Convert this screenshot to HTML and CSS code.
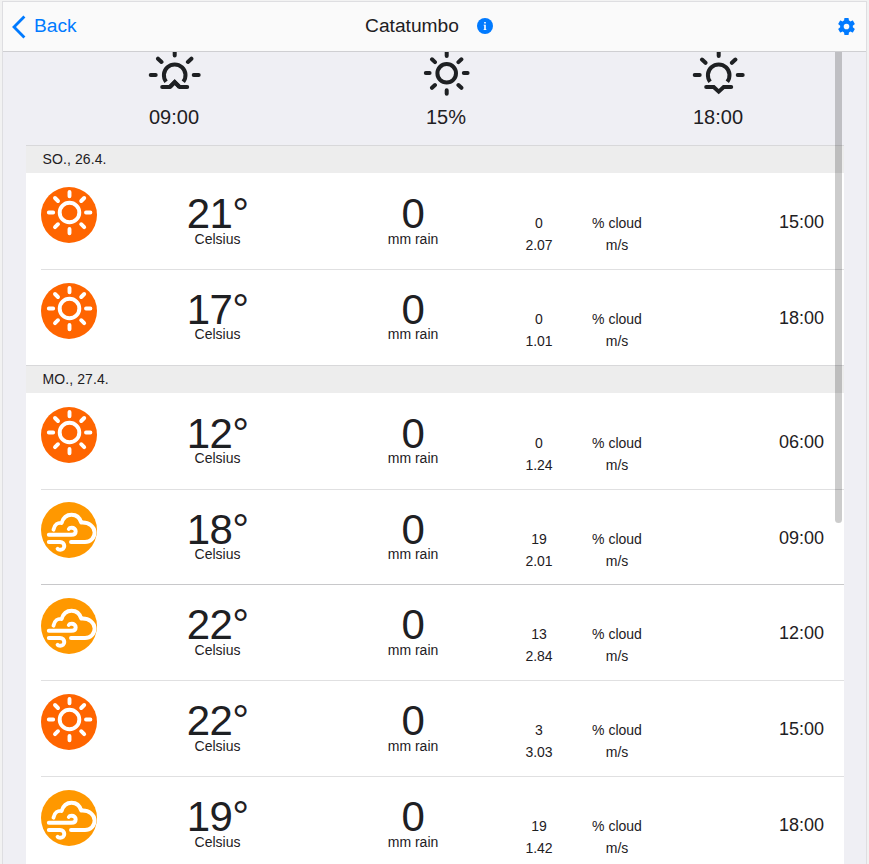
FILE: index.html
```
<!DOCTYPE html>
<html lang="en">
<head>
<meta charset="utf-8">
<title>Catatumbo</title>
<link rel="stylesheet" href="styles.css">
</head>
<body>
<svg class="defs" aria-hidden="true">
  <symbol id="sunny" viewBox="0 0 56 56">
    <circle cx="28.5" cy="25.5" r="9.8"/>
    <path d="M28.5 5v4.2M28.5 42v4.2M7.8 25.5h4.4M45 25.5h4.4M14 11l3 3M40.2 37.2l3 3M14 40.2l3-3M40.2 14l3-3"/>
  </symbol>
  <symbol id="windy" viewBox="0 0 56 56">
    <path d="M12.5 27.7C13.5 22.5 17.3 20.4 20.6 21C22.2 15.3 26 12.7 30.6 12.7C35.5 12.7 38.8 15.5 40.3 20.6C48.2 20 53.6 25 53.6 30.6C53.6 36 49.3 40 44 40H30"/>
    <path d="M7.8 32.8H30.2C33.3 32.8 34.7 31.1 34.7 29.2C34.7 27 32.9 25.7 30.8 25.7C29.2 25.7 28.2 26.2 27.8 27M7.8 40H19C21.7 40 23.3 41.8 23.3 44C23.3 46.4 21.4 47.8 19.2 47.8C17.9 47.8 17.1 47.5 16.6 46.8"/>
  </symbol>
</svg>
<div class="app">
  <header class="bar">
    <a class="back"><svg width="14" height="24" viewBox="0 0 14 24"><path d="M12.4 1.4L2 12l10.4 10.6"/></svg><span>Back</span></a>
    <div class="title"><span>Catatumbo</span>
      <svg width="16" height="16" viewBox="0 0 16 16"><circle cx="8" cy="8" r="8" fill="#007aff"/><path d="M7.2 4h1.6v1.6H7.2zM6.6 6.7h2.2v4.5h.6v.8H6.6v-.8h.6V7.5h-.6z" fill="#fff"/></svg>
    </div>
    <svg class="gear" width="17" height="17" viewBox="2 2 20 20"><path d="M19.43 12.98c.04-.32.07-.64.07-.98s-.03-.66-.07-.98l2.11-1.65c.19-.15.24-.42.12-.64l-2-3.46c-.12-.22-.39-.3-.61-.22l-2.49 1c-.52-.4-1.08-.73-1.69-.98l-.38-2.65A.49.49 0 0 0 14 2h-4c-.25 0-.46.18-.49.42l-.38 2.65c-.61.25-1.17.59-1.69.98l-2.49-1c-.23-.09-.49 0-.61.22l-2 3.46c-.13.22-.07.49.12.64l2.11 1.65c-.04.32-.07.65-.07.98s.03.66.07.98l-2.11 1.65c-.19.15-.24.42-.12.64l2 3.46c.12.22.39.3.61.22l2.49-1c.52.4 1.08.73 1.69.98l.38 2.65c.03.24.24.42.49.42h4c.25 0 .46-.18.49-.42l.38-2.65c.61-.25 1.17-.59 1.69-.98l2.49 1c.23.09.49 0 .61-.22l2-3.46c.12-.22.07-.49-.12-.64zM12 15.3a3.3 3.3 0 1 1 0-6.6 3.3 3.3 0 0 1 0 6.6z"/></svg>
  </header>
  <main class="content">
    <section class="summary">
      <div class="sun"><svg width="56" height="52" viewBox="0 0 56 52"><path class="arc" d="M20.1 29.8A10.8 10.8 0 1 1 37.3 29.8"/><path class="arc" d="M24 35.2l4.7-5 4.7 5"/><path d="M28.7 0v3.6M12 6.7l3.5 3.3M45.4 6.7L41.9 10M4.7 23h5M47.7 23h5M16.2 35h7.5l5-4.9 5 4.9h7.5"/></svg><span>09:00</span></div>
      <div class="sun"><svg width="56" height="52" viewBox="0 0 56 52"><circle cx="28.7" cy="21.3" r="9.3"/><path d="M28.7 0v4M28.7 38.2v3.6M14 7.3l3 2.8M43.4 7.3l-3 2.8M7.8 21h3.8M45.8 21h3.8M14 35.8l3-2.8M43.4 35.8l-3-2.8"/></svg><span>15%</span></div>
      <div class="sun"><svg width="56" height="52" viewBox="0 0 56 52"><path class="arc" d="M20.1 29.8A10.8 10.8 0 1 1 37.3 29.8"/><path d="M28.7 0v4M12 7.5l3.5 3.3M45.4 7.5l-3.5 3.3M4.7 23h5M47.7 23h5M16.2 35h7.5l5 4.6 5-4.6h7.5"/></svg><span>18:00</span></div>
    </section>
    <section class="list">
      <h2 class="day">SO., 26.4.</h2>
      <article class="row"><svg class="badge hot"><use href="#sunny"/></svg><div class="value"><b>21°</b><span>Celsius</span></div><div class="value"><b>0</b><span>mm rain</span></div><div class="pair"><span>0</span><span>2.07</span></div><div class="pair"><span>% cloud</span><span>m/s</span></div><time>15:00</time></article>
      <article class="row"><svg class="badge hot"><use href="#sunny"/></svg><div class="value"><b>17°</b><span>Celsius</span></div><div class="value"><b>0</b><span>mm rain</span></div><div class="pair"><span>0</span><span>1.01</span></div><div class="pair"><span>% cloud</span><span>m/s</span></div><time>18:00</time></article>
      <h2 class="day">MO., 27.4.</h2>
      <article class="row"><svg class="badge hot"><use href="#sunny"/></svg><div class="value"><b>12°</b><span>Celsius</span></div><div class="value"><b>0</b><span>mm rain</span></div><div class="pair"><span>0</span><span>1.24</span></div><div class="pair"><span>% cloud</span><span>m/s</span></div><time>06:00</time></article>
      <article class="row"><svg class="badge mild"><use href="#windy"/></svg><div class="value"><b>18°</b><span>Celsius</span></div><div class="value"><b>0</b><span>mm rain</span></div><div class="pair"><span>19</span><span>2.01</span></div><div class="pair"><span>% cloud</span><span>m/s</span></div><time>09:00</time></article>
      <article class="row strong"><svg class="badge mild"><use href="#windy"/></svg><div class="value"><b>22°</b><span>Celsius</span></div><div class="value"><b>0</b><span>mm rain</span></div><div class="pair"><span>13</span><span>2.84</span></div><div class="pair"><span>% cloud</span><span>m/s</span></div><time>12:00</time></article>
      <article class="row"><svg class="badge hot"><use href="#sunny"/></svg><div class="value"><b>22°</b><span>Celsius</span></div><div class="value"><b>0</b><span>mm rain</span></div><div class="pair"><span>3</span><span>3.03</span></div><div class="pair"><span>% cloud</span><span>m/s</span></div><time>15:00</time></article>
      <article class="row"><svg class="badge mild"><use href="#windy"/></svg><div class="value"><b>19°</b><span>Celsius</span></div><div class="value"><b>0</b><span>mm rain</span></div><div class="pair"><span>19</span><span>1.42</span></div><div class="pair"><span>% cloud</span><span>m/s</span></div><time>18:00</time></article>
    </section>
    <div class="scrollbar"></div>
  </main>
</div>
</body>
</html>
```
FILE: styles.css
```
* { box-sizing: border-box; }
html, body { height: 100%; overflow: hidden; }
body {
  margin: 0;
  padding: 1px 2px 0;
  background: #f2f2f2;
  color: #1e2023;
  font-family: "Liberation Sans", Arial, sans-serif;
}
svg { display: block; flex: none; }
.defs { position: absolute; width: 0; height: 0; }
.app {
  width: 865px;
  height: 863px;
  overflow: hidden;
  border: 1px solid #dedee1;
  border-bottom: 0;
  background: #efeff4;
}
.bar {
  display: grid;
  grid-template-columns: 1fr auto 1fr;
  align-items: center;
  height: 50px;
  padding: 0 11px 1px 9px;
  border-bottom: 1px solid #cfcfd2;
  background: #fafafa;
  font-size: 19.2px;
}
.back { display: flex; align-items: center; gap: 8px; color: #007aff; }
.back svg { fill: none; stroke: #007aff; stroke-width: 2.8; margin-top: 1px; }
.title { display: flex; align-items: center; gap: 18px; margin-right: 9px; }
.gear { justify-self: end; fill: #007aff; }
.content { position: relative; }
.summary {
  display: grid;
  grid-template-columns: repeat(3, 272px);
  height: 93px;
  padding-left: 35px;
}
.sun { display: flex; flex-direction: column; align-items: center; font-size: 20px; line-height: 26px; }
.sun svg { fill: none; stroke: #1e2023; stroke-width: 4; stroke-linecap: round; }
.sun .arc { stroke-linecap: butt; }
.list { width: 818px; margin-left: 23px; background: #fff; }
.day {
  height: 28.15px;
  margin: 0;
  padding-left: 16.5px;
  border-top: 1px solid #d8d8da;
  background: #ededed;
  font-size: 14px;
  font-weight: 400;
  line-height: 26.5px;
  letter-spacing: .1px;
}
.row {
  display: grid;
  grid-template-columns: 56px 241px 150px 102px 54px 1fr;
  align-items: start;
  height: 95.8px;
  margin-left: 15px;
  padding-right: 20px;
  border-top: 1px solid #e0e0e1;
  font-size: 14px;
}
.row.strong { border-color: #c8c8ca; }
.day + .row { border-color: transparent; }
.badge {
  width: 56px;
  height: 56px;
  margin-top: 12.7px;
  border-radius: 50%;
  fill: none;
  stroke: #fff;
  stroke-width: 3.9;
  stroke-linecap: round;
  stroke-linejoin: round;
}
.hot { background: #ff6500; }
.mild { background: #ff9800; }
.value { display: flex; flex-direction: column; align-items: center; padding-top: 16px; line-height: 16px; }
.value b { font-size: 42px; font-weight: 400; line-height: 48px; margin-bottom: -7.5px; letter-spacing: -.6px; }
.pair { display: flex; flex-direction: column; align-items: center; padding-top: 38px; line-height: 22px; white-space: nowrap; }
.row time { padding-top: 37px; font-size: 18px; line-height: 22px; text-align: right; }
.scrollbar {
  position: absolute;
  top: 0;
  left: 832px;
  width: 7px;
  height: 471px;
  border-radius: 0 0 4px 4px;
  background: rgba(0, 0, 0, .2);
}
```
